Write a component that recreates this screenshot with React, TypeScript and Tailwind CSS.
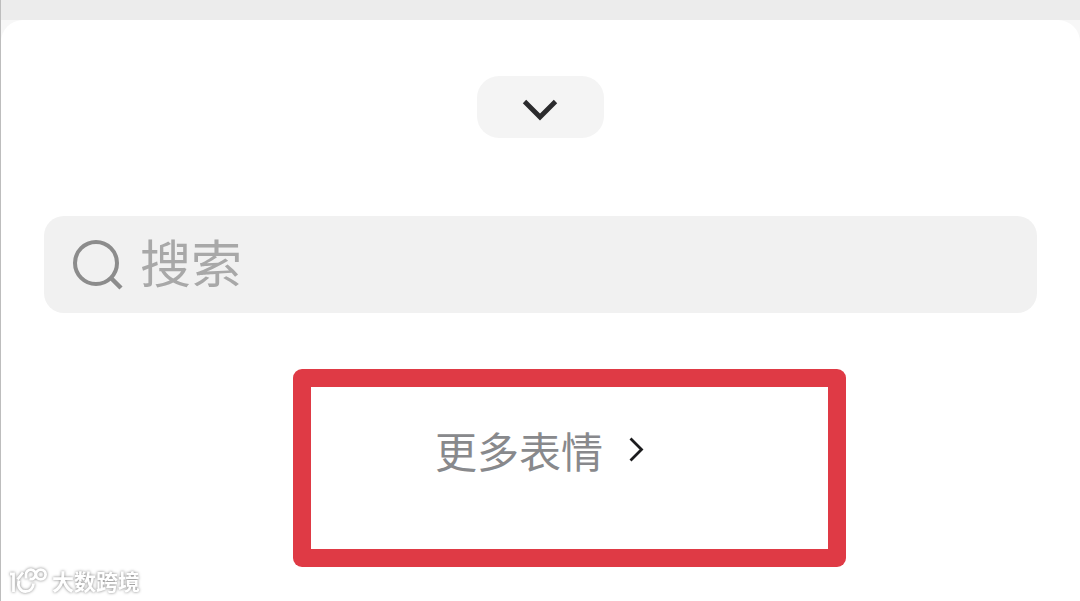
import type { ReactNode } from 'react';

function ChevronDownIcon() {
  return (
    <svg width="36" height="24" viewBox="0 0 36 24" fill="none" stroke="#2b2b2d" strokeWidth="4.8">
      <path d="M2.500 3.500 18 19 33.500 3.500" />
    </svg>
  );
}

function ChevronRightIcon() {
  return (
    <svg width="16" height="26" viewBox="0 0 16 26" fill="none" stroke="#1c1c1e" strokeWidth="2.8">
      <path d="M2.500 1.500 13.500 12.500 2.500 23.500" />
    </svg>
  );
}

function SearchIcon() {
  return (
    <svg width="52" height="52" viewBox="0 0 52 52" fill="none" stroke="#8c8c8c" strokeWidth="4">
      <circle cx="24" cy="24" r="21" />
      <path d="M38 38 49 49" strokeWidth="4.5" />
    </svg>
  );
}

function Highlight({ children }: { children: ReactNode }) {
  return (
    <div className="ml-[293px] mt-[57px] h-[198px] w-[553px] rounded-[9px] bg-[#df3a45] p-[18px]">
      <div className="h-full bg-white">{children}</div>
    </div>
  );
}

function Watermark() {
  return (
    <div className="absolute bottom-[5px] left-2 flex items-center gap-1 text-white drop-shadow-[0_0_1.5px_rgba(0,0,0,0.5)]">
      <svg width="39" height="28" viewBox="0 0 39 28" fill="none" stroke="currentColor" strokeWidth="2.8">
        <path d="M1 6h3.500V24" />
        <path d="M14 4.500 8.500 11.500M10 12.500c-2 6 1.500 11 6.500 11 4.500 0 8-3.500 8-8" />
        <path d="M17 10.500V6.500a4.800 4.800 0 1 1 3.500 4.500M27 6.500a4.800 4.800 0 1 1 9.600 0 4.800 4.800 0 0 1-9.600 0Z" />
      </svg>
      <span className="relative -top-0.5 text-[22px] font-bold leading-7">大数跨境</span>
    </div>
  );
}

export default function App() {
  return (
    <div className="relative h-[601px] w-[1080px] overflow-hidden border-l border-[#bdbdbd] bg-[#ececec] pt-5 font-['Noto_Sans_CJK_SC',sans-serif]">
      {/* the sheet's corners sit on a lighter strip than the bar above */}
      <div className="-ml-px h-full border-l border-[#bdbdbd] bg-[#f7f7f7]">
        <div className="flex h-full flex-col rounded-t-[22px] bg-white pt-14">
          <button className="ml-[476px] flex h-[62px] w-[127px] items-center justify-center rounded-[22px] bg-[#f4f4f4] pr-0.5 pt-1.5">
            <ChevronDownIcon />
          </button>

          <div className="ml-[43px] mt-[78px] flex h-[97px] w-[993px] items-center rounded-[20px] bg-[#f1f1f1] pl-[28px]">
            <SearchIcon />
            <span className="-mt-1.5 ml-4 text-[51px] font-normal leading-none text-[#a8a8a8]">搜索</span>
          </div>

          <div className="-ml-px -mt-px">
            <Highlight>
              <div className="flex items-center pl-[124px] pt-[42px]">
                <span className="text-[42px] font-normal leading-[42px] text-[#88898c]">更多表情</span>
                <span className="ml-[25px]">
                  <ChevronRightIcon />
                </span>
              </div>
            </Highlight>
          </div>
        </div>
      </div>
      <Watermark />
    </div>
  );
}
